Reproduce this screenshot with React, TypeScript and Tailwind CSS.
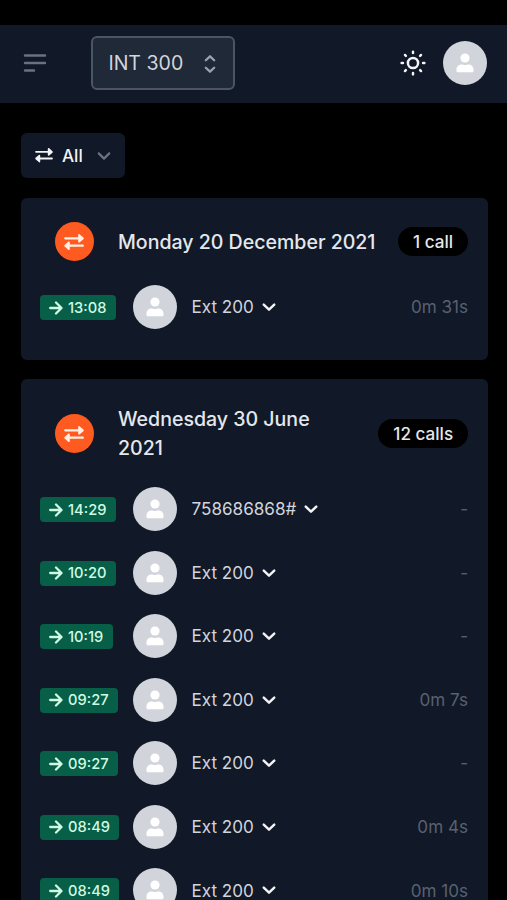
import type { ReactNode } from "react";

interface Call {
  time: string;
  name: string;
  duration: string;
}

interface Day {
  date: string;
  total: string;
  calls: Call[];
}

const days: Day[] = [
  {
    date: "Monday 20 December 2021",
    total: "1 call",
    calls: [{ time: "13:08", name: "Ext 200", duration: "0m 31s" }],
  },
  {
    date: "Wednesday 30 June 2021",
    total: "12 calls",
    calls: [
      { time: "14:29", name: "758686868#", duration: "-" },
      { time: "10:20", name: "Ext 200", duration: "-" },
      { time: "10:19", name: "Ext 200", duration: "-" },
      { time: "09:27", name: "Ext 200", duration: "0m 7s" },
      { time: "09:27", name: "Ext 200", duration: "-" },
      { time: "08:49", name: "Ext 200", duration: "0m 4s" },
      { time: "08:49", name: "Ext 200", duration: "0m 10s" },
    ],
  },
];

function ExchangeIcon({ className }: { className: string }) {
  return (
    <svg viewBox="0 0 20 16" className={className} fill="currentColor">
      <path d="M1.2 3.2h13V1.1c0-1 1-1.3 1.6-.7l3.6 3.1c.5.5.5 1.2 0 1.7l-3.6 3.1c-.6.6-1.6.2-1.6-.7V5.4h-13a1.1 1.1 0 0 1 0-2.2Z" />
      <path d="M18.8 10.6h-13V8.5c0-1-1-1.3-1.6-.7L.6 10.9c-.5.5-.5 1.2 0 1.7l3.6 3.1c.6.6 1.6.2 1.6-.7v-2.2h13a1.1 1.1 0 0 0 0-2.2Z" />
    </svg>
  );
}

function Stroke({ className, children }: { className: string; children: ReactNode }) {
  return (
    <svg
      className={className}
      viewBox="0 0 24 24"
      fill="none"
      stroke="currentColor"
      strokeLinecap="round"
      strokeLinejoin="round"
    >
      {children}
    </svg>
  );
}

function Avatar() {
  return (
    <div className="flex size-11 shrink-0 items-center justify-center rounded-full bg-[#d1d5db] text-white">
      <svg viewBox="0 0 18 20" className="h-5 w-[18px]" fill="currentColor">
        <circle cx="9" cy="5" r="4.6" />
        <path d="M.5 16.6c0-3 2.1-5.2 4.9-5.2 1.4 0 1.9.5 3.6.5s2.2-.5 3.6-.5c2.8 0 4.9 2.2 4.9 5.2v1.3c0 .8-.6 1.4-1.4 1.4H1.9c-.8 0-1.4-.6-1.4-1.4Z" />
      </svg>
    </div>
  );
}

function CallRow({ call }: { call: Call }) {
  return (
    <div className="flex h-[63.56px] items-center">
      <div className="w-[92.5px] shrink-0">
        <div className="inline-flex h-[25px] items-center gap-[5px] rounded bg-[#065f46] pr-[9.5px] pl-[9px] align-middle text-[14.67px] font-medium text-[#d1fae5]">
          <Stroke className="size-[14px]">
            <path d="M2 12h19M12 2.5l9.5 9.5-9.5 9.5" strokeWidth="3.9" />
          </Stroke>
          {call.time}
        </div>
      </div>
      <Avatar />
      <div className="ml-[15px] flex flex-1 items-center text-[17.1px] text-gray-300">
        {call.name}
        <Stroke className="ml-2 size-[14px] text-gray-100">
          <path d="m3 8 9 8.5L21 8" strokeWidth="4.2" />
        </Stroke>
      </div>
      <div className="text-[17.1px] text-[#596170]">{call.duration}</div>
    </div>
  );
}

function DayCard({ day }: { day: Day }) {
  return (
    <section className="rounded-md bg-[#111827] px-[19.5px] pt-[19.5px] pb-[20.8px]">
      <div className="mb-[9px] flex items-center py-[4.9px]">
        <div className="ml-[14.5px] flex size-[39px] shrink-0 items-center justify-center rounded-full bg-[#ff5a1f] text-[#fff1e9]">
          <ExchangeIcon className="h-4 w-5" />
        </div>
        <h2 className="mr-[22px] ml-[24.5px] flex-1 pt-px text-[19.56px] leading-[29.3px] font-medium text-gray-200">
          {day.date}
        </h2>
        <div className="flex h-[29px] shrink-0 items-center rounded-full bg-black px-[14.9px] text-[17.1px] font-medium text-gray-200">
          {day.total}
        </div>
      </div>
      {day.calls.map((call, i) => (
        <CallRow key={i} call={call} />
      ))}
    </section>
  );
}

export default function App() {
  return (
    <div className="h-[900px] w-[507px] overflow-hidden bg-black pt-[25px] font-['Inter',sans-serif]">
      <header className="flex h-[78px] items-center bg-[#111827] pr-[20px] pb-[2px] pl-[23px]">
        <Stroke className="size-6 text-gray-500">
          <path d="M2 4.5h20M2 12h20M2 19.5h9" strokeWidth="2.4" />
        </Stroke>
        <button className="ml-[44.4px] flex h-[54px] w-36 items-center justify-between rounded-md border-2 border-gray-600 bg-[#1f2937] pt-px pr-[13px] pl-[15px] text-[19.56px] text-gray-300">
          INT 300
          <Stroke className="size-5 text-gray-400">
            <path d="m7 7.5 5-4.7 5 4.7M7 16.5l5 4.7 5-4.7" strokeWidth="2.8" />
          </Stroke>
        </button>
        <Stroke className="mr-[17px] ml-auto size-[26px] text-gray-100">
          <circle cx="12" cy="12" r="4.7" strokeWidth="2.3" />
          <path
            d="M12 1.5v1.2M12 21.3v1.2M1.5 12h1.2M21.3 12h1.2M4.6 4.6l.8.8M18.6 18.6l.8.8M4.6 19.4l.8-.8M18.6 5.4l.8-.8"
            strokeWidth="2.3"
          />
        </Stroke>
        <Avatar />
      </header>
      <main className="flex flex-col items-stretch pt-[30px] pr-[19.5px] pl-[20.5px]">
        <button className="mb-[20px] flex h-[45px] w-[104.5px] items-center rounded-md bg-[#111827] pl-[14.5px] text-[17.1px] font-medium text-gray-100">
          <ExchangeIcon className="mr-[9px] h-[14.4px] w-[18px]" />
          All
          <Stroke className="ml-[14.5px] size-[14px] text-gray-500">
            <path d="m3 7.5 9 9 9-9" strokeWidth="3.8" />
          </Stroke>
        </button>
        <div className="flex flex-col gap-[19.8px]">
          {days.map((day) => (
            <DayCard key={day.date} day={day} />
          ))}
        </div>
      </main>
    </div>
  );
}
